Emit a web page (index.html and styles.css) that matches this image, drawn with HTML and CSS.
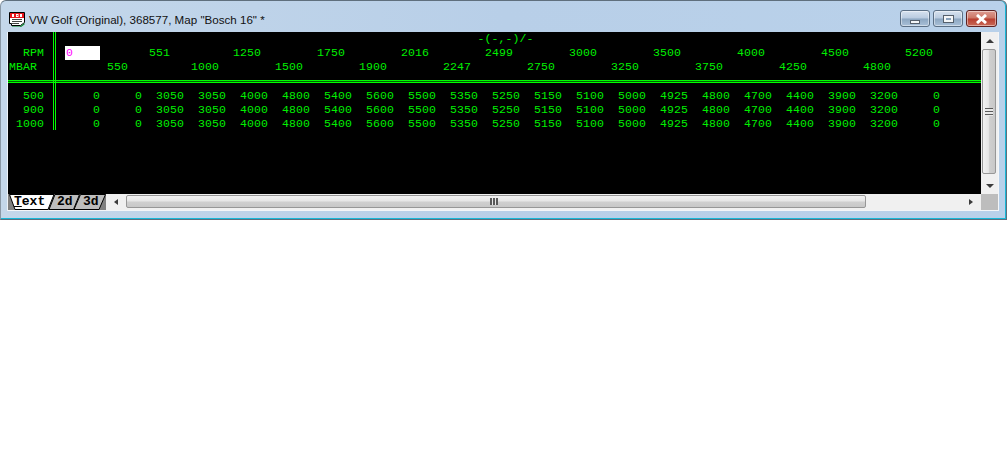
FILE: index.html
```html
<!DOCTYPE html>
<html>
<head>
<meta charset="utf-8">
<title>VW Golf</title>
<link rel="stylesheet" href="styles.css">
</head>
<body>
<div class="window">
  <div class="titlebar">
    <svg class="appicon" width="16" height="15" viewBox="0 0 16 15"><path d="M0.500 0.500H15.500V10.500L11.500 13.500H2.500V11.500H0.500Z" fill="#fff" stroke="#000"/><path d="M11 14.500L15.500 11V12.500L12 15H3V14.500Z" fill="#0a8a2a"/><rect x="1" y="1" width="14" height="5" fill="#e8141c"/><path d="M3 2H5V5H3ZM7 2H9.500V5H7ZM11 2H13V5H11Z" fill="#fff"/><rect x="7.800" y="3" width="1" height="1" fill="#e8141c"/><path d="M3 7.500H13M3 9.500H13M3 11.500H10" stroke="#444" stroke-width="1"/></svg>
    <span class="wintitle">VW Golf (Original), 368577, Map "Bosch 16" *</span>
    <div class="caption">
      <div class="capbtn min"><span class="minglyph"></span></div>
      <div class="capbtn max"><span class="maxglyph"></span></div>
      <div class="capbtn close"><svg width="13" height="10" viewBox="0 0 13 10"><path d="M2 1L11 9M11 1L2 9" stroke="#fff" stroke-width="3"/></svg></div>
    </div>
  </div>
  <div class="client">
    <div class="upper">
      <div class="sheet">
        <div class="coords">-(-,-)/-</div>
        <div class="headrow">
          <div class="corner">RPM</div>
          <div class="hgrid">
            <span class="hcell sel">0</span><span class="hcell"></span><span class="hcell">551</span><span class="hcell"></span><span class="hcell">1250</span><span class="hcell"></span><span class="hcell">1750</span><span class="hcell"></span><span class="hcell">2016</span><span class="hcell"></span><span class="hcell">2499</span><span class="hcell"></span><span class="hcell">3000</span><span class="hcell"></span><span class="hcell">3500</span><span class="hcell"></span><span class="hcell">4000</span><span class="hcell"></span><span class="hcell">4500</span><span class="hcell"></span><span class="hcell">5200</span>
          </div>
        </div>
        <div class="headrow">
          <div class="corner mbar">MBAR</div>
          <div class="hgrid">
            <span class="hcell"></span><span class="hcell">550</span><span class="hcell"></span><span class="hcell">1000</span><span class="hcell"></span><span class="hcell">1500</span><span class="hcell"></span><span class="hcell">1900</span><span class="hcell"></span><span class="hcell">2247</span><span class="hcell"></span><span class="hcell">2750</span><span class="hcell"></span><span class="hcell">3250</span><span class="hcell"></span><span class="hcell">3750</span><span class="hcell"></span><span class="hcell">4250</span><span class="hcell"></span><span class="hcell">4800</span>
          </div>
        </div>
        <div class="hrule"></div>
        <div class="datarow"><div class="corner">500</div><div class="dgrid"><span>0</span><span>0</span><span>3050</span><span>3050</span><span>4000</span><span>4800</span><span>5400</span><span>5600</span><span>5500</span><span>5350</span><span>5250</span><span>5150</span><span>5100</span><span>5000</span><span>4925</span><span>4800</span><span>4700</span><span>4400</span><span>3900</span><span>3200</span><span>0</span></div></div>
        <div class="datarow"><div class="corner">900</div><div class="dgrid"><span>0</span><span>0</span><span>3050</span><span>3050</span><span>4000</span><span>4800</span><span>5400</span><span>5600</span><span>5500</span><span>5350</span><span>5250</span><span>5150</span><span>5100</span><span>5000</span><span>4925</span><span>4800</span><span>4700</span><span>4400</span><span>3900</span><span>3200</span><span>0</span></div></div>
        <div class="datarow"><div class="corner">1000</div><div class="dgrid"><span>0</span><span>0</span><span>3050</span><span>3050</span><span>4000</span><span>4800</span><span>5400</span><span>5600</span><span>5500</span><span>5350</span><span>5250</span><span>5150</span><span>5100</span><span>5000</span><span>4925</span><span>4800</span><span>4700</span><span>4400</span><span>3900</span><span>3200</span><span>0</span></div></div>
        <div class="vrule"></div>
      </div>
      <div class="vscroll">
        <div class="arrowbox"><span class="tri up"></span></div>
        <div class="vthumb"><span class="grip vgrip"></span></div>
        <div class="vtrack"></div>
        <div class="arrowbox"><span class="tri down"></span></div>
      </div>
    </div>
    <div class="lower">
      <div class="tabs">
        <svg class="tabsvg" width="98" height="16" viewBox="0 0 98 16">
          <path d="M72.500 0.500H97.500L91 15.500H66Z" fill="#bdbdbd" stroke="#000"/>
          <path d="M47 0.500H71.500L65.500 15.500H41Z" fill="#bdbdbd" stroke="#000"/>
          <path d="M1.500 0.500H46L40 15.500H7Z" fill="#fff" stroke="#000"/>
        </svg>
        <span class="tab t1"><u>T</u>ext</span><span class="tab t2">2d</span><span class="tab t3">3d</span>
      </div>
      <div class="hscroll">
        <div class="harrow"><span class="tri left"></span></div>
        <div class="hthumb"><span class="grip hgrip"></span></div>
        <div class="htrack"></div>
        <div class="harrow"><span class="tri right"></span></div>
      </div>
      <div class="sizebox"></div>
    </div>
  </div>
</div>
</body>
</html>
```
FILE: styles.css
```css
html, body { margin: 0; padding: 0; background: #fff; }
body { width: 1008px; height: 460px; overflow: hidden; }
.window {
  width: 1007px; height: 220px; box-sizing: border-box;
  background: linear-gradient(90deg, #c4d7ea 0, #b8cfe8 50%, #b9d1ea 100%);
  border-radius: 6px 6px 0 0;
  border: 1px solid #5f6f7d; border-left-color: #8a98a5;
  box-shadow: inset 0 -1px 0 #18b8d8, inset -1px 0 0 #18b8d8;
  display: flex; flex-direction: column;
  padding: 0 7px;
}
.titlebar { height: 31px; flex: none; display: flex; align-items: center; padding-top: 5px; box-sizing: border-box; }
.appicon { margin: 0 4px 0 1px; flex: none; }
.wintitle { font: 11.600px "Liberation Sans", Arial, sans-serif; color: #111; white-space: nowrap; }
.caption { margin-left: auto; display: flex; gap: 3px; align-self: flex-start; margin-top: 4px; margin-right: 2px; }
.capbtn { height: 17px; box-sizing: border-box; border: 1px solid #5b6f85; border-radius: 3px; display: flex; align-items: center; justify-content: center;
  background: linear-gradient(180deg, #d7e2ef 0, #b9cbe0 48%, #8ca6c1 52%, #a9c0d8 100%); box-shadow: inset 0 0 0 1px rgba(255,255,255,.45); }
.min, .max { width: 30px; }
.close { width: 31px; border-color: #5e2222; background: linear-gradient(180deg, #dd9c92 0, #cc7565 48%, #b83d2f 52%, #c96a58 100%); }
.minglyph { width: 8px; height: 2px; margin-top: 6px; background: #f4f6f8; border: 1px solid #56606c; }
.maxglyph { width: 5px; height: 2px; border: 2px solid #f4f6f8; outline: 1px solid #56606c; background: #8aa3bd; }
.client { flex: none; width: 990px; height: 178px; display: flex; flex-direction: column; background: #000;
  border-right: 1px solid #f4f6f8; border-bottom: 1px solid #f4f6f8; box-shadow: -1px 0 0 #eef2f7; }
.upper { height: 162px; flex: none; display: flex; }
.sheet { position: relative; flex: none; width: 973px; background: #000; color: #00f000;
  font: 11.500px/14px "Liberation Mono", "Courier New", monospace; letter-spacing: .1px; overflow: hidden; }
.coords { height: 14px; text-align: center; margin-left: 22px; }
.headrow { display: flex; height: 14px; }
.corner { width: 36px; flex: none; text-align: right; margin-right: 14px; }
.mbar { text-align: left; padding-left: 1px; width: 35px; }
.hgrid { display: grid; grid-template-columns: repeat(21, 42px); }
.hcell { padding-left: 7px; white-space: nowrap; }
.sel { background: #fff; color: #ff00ff; margin-left: 7px; padding-left: 1px; height: 14px; }
.hrule { height: 1px; background: #006000; border-top: 1px solid #00ff00; border-bottom: 1px solid #00ff00; margin: 6px 0 6px; }
.datarow { display: flex; height: 14px; }
.dgrid { display: grid; grid-template-columns: repeat(21, 42px); }
.dgrid span { text-align: right; }
.vrule { position: absolute; left: 45px; top: 0; width: 1px; height: 98px; border-left: 1px solid #00ff00; border-right: 1px solid #00ff00; }
.vscroll { flex: none; width: 17px; background: #f0f0f0; display: flex; flex-direction: column; }
.arrowbox { height: 17px; flex: none; display: flex; align-items: center; justify-content: center; }
.vthumb { height: 125px; flex: none; margin: 0 2px 0 1px; box-sizing: border-box; border: 1px solid #979797; border-radius: 2px;
  background: linear-gradient(90deg, #f2f2f2, #e6e6e6 45%, #cfcfcf 55%, #c8c8c8); display: flex; align-items: center; justify-content: center; }
.vtrack { flex: 1; }
.lower { height: 16px; flex: none; display: flex; background: #f0f0f0; }
.tabs { position: relative; flex: none; width: 98px; height: 16px; background: #808080; font: bold 13px/15px "Liberation Mono", monospace; color: #000; }
.tabsvg { position: absolute; left: 0; top: 0; }
.tab { position: absolute; top: 0; }
.t1 { left: 6px; }
.t2 { left: 49px; }
.t3 { left: 75px; }
.hscroll { flex: 1; display: flex; align-items: stretch; }
.harrow { width: 20px; flex: none; display: flex; align-items: center; justify-content: center; }
.hthumb { width: 740px; flex: none; box-sizing: border-box; border: 1px solid #979797; border-radius: 2px; background: linear-gradient(180deg, #f2f2f2, #e6e6e6 45%, #cfcfcf 55%, #c8c8c8); display: flex; align-items: center; justify-content: center; margin: 1px 0 2px; }
.htrack { flex: 1; }
.sizebox { width: 17px; flex: none; background: #bdbdbd; }
.tri { width: 0; height: 0; display: block; border-style: solid; border-color: transparent; }
.up { border-width: 0 4px 4px; border-bottom-color: #3b3b3b; }
.down { border-width: 4px 4px 0; border-top-color: #3b3b3b; }
.left { border-width: 3.500px 4px 3.500px 0; border-right-color: #3b3b3b; }
.right { border-width: 3.500px 0 3.500px 4px; border-left-color: #3b3b3b; }
.grip { display: block; }
.hgrip { width: 8px; height: 7px; margin-right: 4px; background: repeating-linear-gradient(90deg, #5a5a5a 0 2px, #e8e8e8 2px 3px); }
.vgrip { width: 8px; height: 8px; background: repeating-linear-gradient(180deg, #5a5a5a 0 1px, #e8e8e8 1px 3px); }
```
